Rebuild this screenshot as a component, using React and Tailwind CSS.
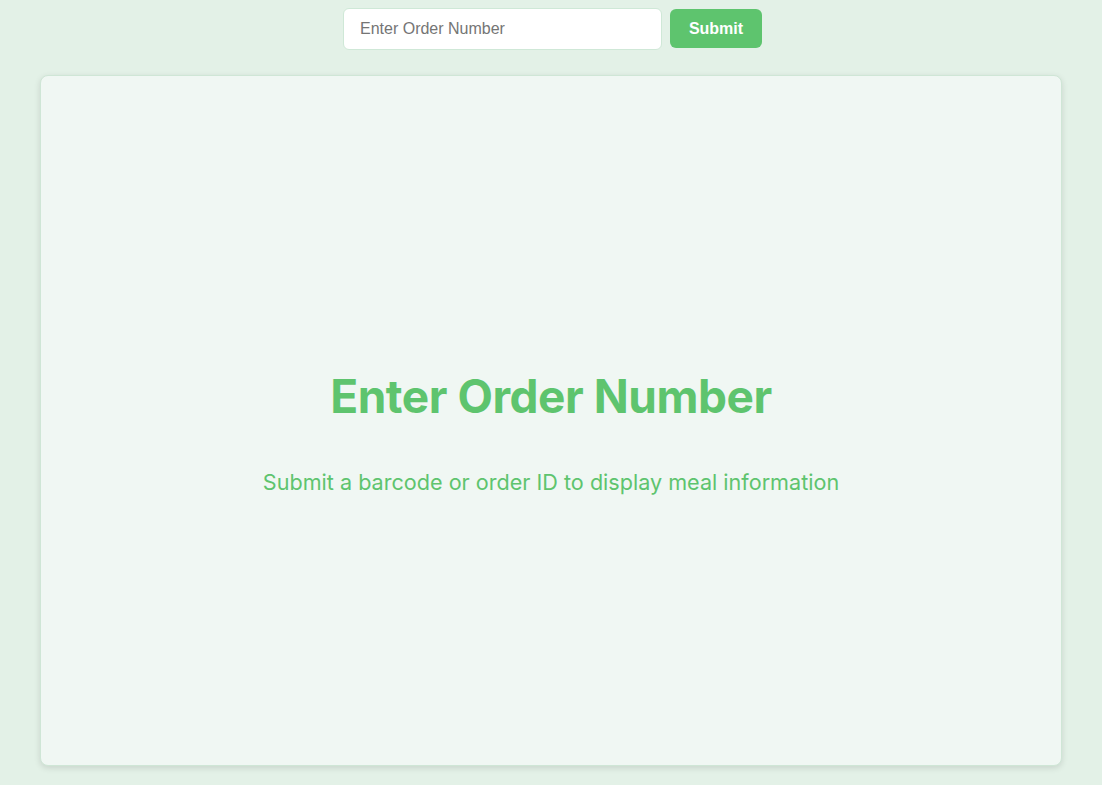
export default function App() {
  return (
    <div className="min-h-screen bg-[#e3f1e7] flex flex-col px-10 pb-5" style={{ fontFamily: 'Inter, "Liberation Sans", sans-serif' }}>
      <div className="flex justify-center items-center gap-2 pt-[7px] h-[50px] ml-[3px]">
        <input
          type="text"
          placeholder="Enter Order Number"
          className="w-[319px] h-[42px] rounded-md border border-[#cfe8d7] bg-white px-4 text-base text-gray-700 placeholder:text-[#757575] outline-none"
          style={{ fontFamily: '"Liberation Sans", Arial, sans-serif' }}
        />
        <button
          className="w-[92px] h-[39px] rounded-md bg-[#5ec46e] text-white text-base font-bold"
          style={{ fontFamily: '"Liberation Sans", Arial, sans-serif' }}
        >
          Submit
        </button>
      </div>
      <div className="mt-[25px] h-[691px] rounded-lg border border-[#cfe6d6] bg-[#f0f7f3] shadow-[0_2px_6px_rgba(0,0,0,0.12)] flex flex-col items-center justify-center pt-[22px]">
        <h1 className="text-[46px] leading-[58px] font-bold text-[#5ec46e] tracking-[-0.01em]">Enter Order Number</h1>
        <p className="mt-[42px] text-[21.6px] leading-[30px] text-[#5ec46e]">Submit a barcode or order ID to display meal information</p>
      </div>
    </div>
  );
}
